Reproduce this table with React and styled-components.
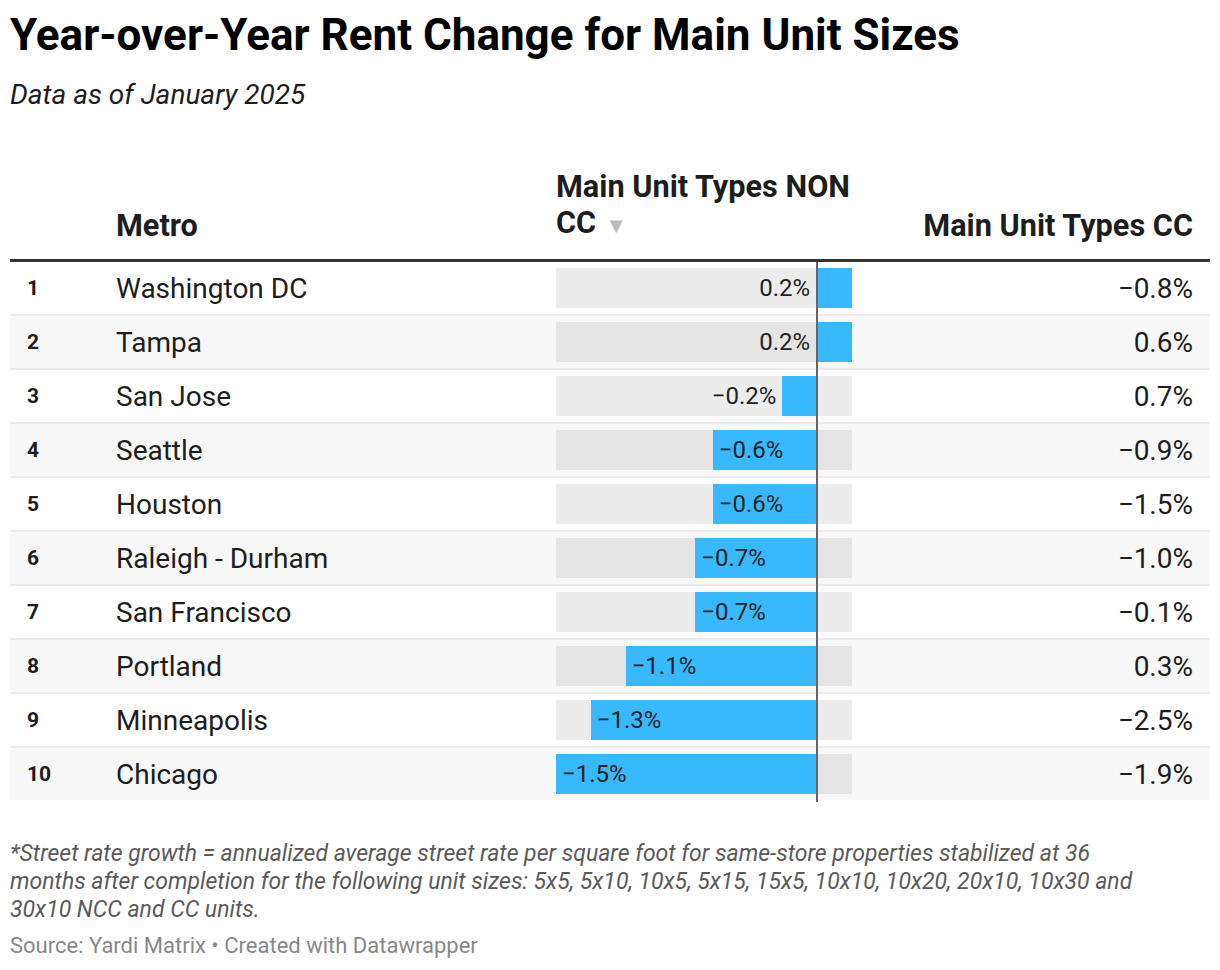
import styled, { createGlobalStyle } from "styled-components";

const GlobalStyle = createGlobalStyle`
  body {
    margin: 0;
    background: #fff;
    font-family: Roboto, "Liberation Sans", sans-serif;
    color: #1d1d1d;
  }
`;

const rows = [
  { metro: "Washington DC", noncc: 0.2, cc: -0.8 },
  { metro: "Tampa", noncc: 0.2, cc: 0.6 },
  { metro: "San Jose", noncc: -0.2, cc: 0.7 },
  { metro: "Seattle", noncc: -0.6, cc: -0.9 },
  { metro: "Houston", noncc: -0.6, cc: -1.5 },
  { metro: "Raleigh - Durham", noncc: -0.7, cc: -1.0 },
  { metro: "San Francisco", noncc: -0.7, cc: -0.1 },
  { metro: "Portland", noncc: -1.1, cc: 0.3 },
  { metro: "Minneapolis", noncc: -1.3, cc: -2.5 },
  { metro: "Chicago", noncc: -1.5, cc: -1.9 },
];

const MIN = -1.5;
const MAX = 0.2;
const TRACK = 296;
const SCALE = TRACK / (MAX - MIN);
const ZERO = -MIN * SCALE;

const fmt = (v) => (v < 0 ? "\u2212" : "") + Math.abs(v).toFixed(1) + "%";

const Page = styled.div`
  width: 1200px;
  padding: 9px 10px 0;
`;

const Title = styled.h1`
  margin: 0;
  font-size: 44px;
  line-height: 52px;
  font-weight: 700;
  color: #000;
`;

const Subtitle = styled.div`
  margin-top: 17px;
  font-size: 28px;
  line-height: 34px;
  font-style: italic;
  color: #1d1d1d;
`;

const Table = styled.div`
  margin-top: 57px;
`;

const Grid = styled.div`
  display: grid;
  grid-template-columns: 106px 440px 296px 1fr;
`;

const HeaderRow = styled(Grid)`
  align-items: end;
  padding-bottom: 15px;
  border-bottom: 3px solid #333;
  font-size: 30.7px;
  line-height: 36px;
  font-weight: 700;
`;

const HeadCell = styled.div`
  text-align: ${(p) => (p.$right ? "right" : "left")};
  padding-right: ${(p) => (p.$right ? "17px" : "0")};
  white-space: nowrap;
`;

const SortArrow = styled.span`
  color: #bbb;
  font-size: 22px;
  margin-left: 9px;
`;

const Row = styled(Grid)`
  height: 52px;
  align-items: center;
  background: ${(p) => (p.$odd ? "#f7f7f7" : "#fff")};
  border-bottom: 2px solid #ebebeb;
  &:last-child {
    border-bottom: none;
  }
`;

const Rank = styled.div`
  padding-left: 17px;
  font-size: 21px;
  font-weight: 700;
`;

const Metro = styled.div`
  font-size: 28px;
`;

const BarCell = styled.div`
  position: relative;
  align-self: stretch;
  display: flex;
  align-items: center;
  &::after {
    content: "";
    position: absolute;
    left: ${ZERO - 1}px;
    top: 0;
    bottom: -2px;
    width: 2px;
    background: #666;
  }
`;

const Track = styled.div`
  position: relative;
  width: ${TRACK}px;
  height: 40px;
  background: rgba(0, 0, 0, 0.075);
`;

const Bar = styled.div`
  position: absolute;
  top: 0;
  bottom: 0;
  background: #38b8fd;
`;

const BarLabel = styled.span`
  position: absolute;
  top: 0;
  line-height: 40px;
  font-size: 24px;
  color: #222;
  white-space: nowrap;
`;

const Value = styled.div`
  text-align: right;
  padding-right: 17px;
  font-size: 28px;
`;

const Notes = styled.div`
  margin-top: 40px;
  font-size: 23px;
  line-height: 28px;
  font-style: italic;
  color: #5a5a5a;
`;

const Source = styled.div`
  margin-top: 9px;
  font-size: 22px;
  line-height: 26px;
  color: #888;
`;

function BarChart({ value }) {
  const left = (Math.min(value, 0) - MIN) * SCALE;
  const width = Math.abs(value) * SCALE;
  let labelStyle;
  if (value >= 0) {
    labelStyle = { right: TRACK - ZERO + 7 };
  } else if (width > 80) {
    labelStyle = { left: left + 6 };
  } else {
    labelStyle = { right: TRACK - left + 6 };
  }
  return (
    <Track>
      <Bar style={{ left, width }} />
      <BarLabel style={labelStyle}>{fmt(value)}</BarLabel>
    </Track>
  );
}

export default function App() {
  return (
    <Page>
      <GlobalStyle />
      <Title>Year-over-Year Rent Change for Main Unit Sizes</Title>
      <Subtitle>Data as of January 2025</Subtitle>
      <Table>
        <HeaderRow>
          <HeadCell />
          <HeadCell>Metro</HeadCell>
          <HeadCell>
            Main Unit Types NON
            <br />
            CC<SortArrow>▼</SortArrow>
          </HeadCell>
          <HeadCell $right>Main Unit Types CC</HeadCell>
        </HeaderRow>
        {rows.map((r, i) => (
          <Row key={r.metro} $odd={i % 2 === 1}>
            <Rank>{i + 1}</Rank>
            <Metro>{r.metro}</Metro>
            <BarCell>
              <BarChart value={r.noncc} />
            </BarCell>
            <Value>{fmt(r.cc)}</Value>
          </Row>
        ))}
      </Table>
      <Notes>
        *Street rate growth = annualized average street rate per square foot for
        same-store properties stabilized at 36
        <br />
        months after completion for the following unit sizes: 5x5, 5x10, 10x5,
        5x15, 15x5, 10x10, 10x20, 20x10, 10x30 and
        <br />
        30x10 NCC and CC units.
      </Notes>
      <Source>Source: Yardi Matrix • Created with Datawrapper</Source>
    </Page>
  );
}
